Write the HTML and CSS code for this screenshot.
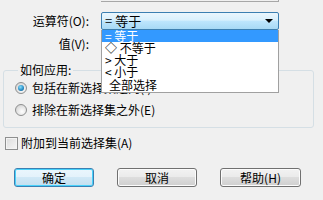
FILE: index.html
```html
<!DOCTYPE html>
<html>
<head>
<meta charset="utf-8">
<link rel="stylesheet" href="styles.css">
</head>
<body>
<div class="dlg">
  <div class="topedge"></div>
  <div class="row r1">
    <span class="lbl">运算符(<u>O</u>):</span>
    <div class="combo">
      <span class="ctext">= 等于</span>
      <span class="arrow"></span>
    </div>
  </div>
  <div class="row r2">
    <span class="lbl">值(<u>V</u>):</span>
  </div>
  <fieldset class="group">
    <legend class="legend">如何应用:</legend>
    <div class="opt first">
      <span class="radio on"><span class="dot"></span></span>
      <span class="otext">包括在新选择集之内(<u>I</u>)</span>
    </div>
    <div class="opt">
      <span class="radio"></span>
      <span class="otext">排除在新选择集之外(<u>E</u>)</span>
    </div>
  </fieldset>
  <div class="check">
    <span class="box"></span>
    <span class="ctxt">附加到当前选择集(<u>A</u>)</span>
  </div>
  <div class="buttons">
    <button class="btn default">确定</button>
    <button class="btn">取消</button>
    <button class="btn wide">帮助(<u>H</u>)</button>
  </div>
  <ul class="list">
    <li class="item sel">= 等于</li>
    <li class="item">◇ 不等于</li>
    <li class="item">&gt; 大于</li>
    <li class="item">&lt; 小于</li>
    <li class="item last">全部选择</li>
  </ul>
</div>
</body>
</html>
```

FILE: styles.css
```css
html, body {
  margin: 0;
  padding: 0;
  background: #f0f0f0;
}
.dlg {
  position: relative;
  width: 323px;
  height: 200px;
  overflow: hidden;
  font-family: "Noto Sans CJK SC", "Liberation Sans", sans-serif;
  font-size: 12px;
  color: #000;
}
u { text-decoration: none; }
.topedge {
  margin-left: 101px;
  width: 177px;
  height: 1px;
  border-bottom: 1px solid #a7a7a7;
  border-right: 1px solid #a7a7a7;
}
.row {
  display: grid;
  grid-template-columns: 101px 178px;
  height: 18px;
  align-items: center;
}
.r1 { margin-top: 10px; }
.r2 { margin-top: 5px; }
.lbl {
  text-align: right;
  padding-right: 12px;
  line-height: 18px;
}
.combo {
  box-sizing: border-box;
  height: 18px;
  border: 1px solid #3c7fb1;
  border-radius: 2px;
  background: linear-gradient(#eaf6fd, #d9f0fc 45%, #bee6fd 50%, #a7d9f5);
  display: flex;
  align-items: center;
  justify-content: space-between;
  padding: 0 5px 0 3px;
}
.ctext {
  font-size: 13px;
  line-height: 16px;
}
.arrow {
  width: 0;
  height: 0;
  border-left: 4px solid transparent;
  border-right: 4px solid transparent;
  border-top: 4px solid #000;
}
.group {
  margin: 10px 9px 0 3px;
  padding: 0 0 9px 11px;
  border: 1px solid #d5dfe5;
  border-radius: 3px;
  min-width: 0;
}
.legend {
  padding: 0 2px;
  margin-left: 3px;
  line-height: 14px;
}
.opt {
  display: flex;
  align-items: center;
  height: 16px;
  margin-top: 5px;
}
.opt.first { margin-top: 3px; }
.opt + .opt { margin-top: 6px; }
.radio {
  box-sizing: border-box;
  width: 12px;
  height: 12px;
  border-radius: 50%;
  border: 1px solid #8e8f8f;
  background: radial-gradient(circle at 60% 65%, #ffffff, #e0e0e0 60%, #c9c9c9);
  display: flex;
  align-items: center;
  justify-content: center;
}
.dot {
  width: 6px;
  height: 6px;
  border-radius: 50%;
  background: radial-gradient(circle at 40% 35%, #8be0fb, #2a8fc8 55%, #0c4a73);
}
.otext {
  margin-left: 5px;
  line-height: 16px;
  white-space: nowrap;
}
.check {
  display: flex;
  align-items: center;
  height: 16px;
  margin: 7px 0 0 5px;
}
.box {
  box-sizing: border-box;
  width: 13px;
  height: 13px;
  border: 1px solid #8e8f8f;
  background: linear-gradient(135deg, #dcdcdc, #f6f6f6);
  box-shadow: inset 0 0 0 1px #f4f4f4;
}
.ctxt {
  margin-left: 3px;
  line-height: 16px;
}
.buttons {
  display: flex;
  gap: 23px;
  margin: 17px 0 0 14px;
}
.btn {
  box-sizing: border-box;
  width: 80px;
  height: 19px;
  padding: 0;
  font: inherit;
  line-height: 16px;
  color: #000;
  border: 1px solid #707070;
  border-radius: 3px;
  background: linear-gradient(#f2f2f2, #ebebeb 45%, #dddddd 50%, #cfcfcf);
  box-shadow: inset 0 0 0 1px #fcfcfc;
}
.btn.wide { width: 81px; }
.btn.default {
  border-color: #3c7fb1;
  box-shadow: inset 0 0 0 1px #48d2fb;
  background: linear-gradient(#eaf6fd, #e4f2fb 45%, #d0e8f6 50%, #c3dfef);
}
.list {
  position: absolute;
  left: 101px;
  top: 30px;
  width: 178px;
  box-sizing: border-box;
  margin: 0;
  padding: 0;
  list-style: none;
  background: #fff;
  border: 1px solid #a0a0a0;
  border-top: none;
}
.item {
  height: 12px;
  line-height: 12px;
  font-size: 12px;
  padding-left: 3px;
  white-space: nowrap;
}
.item.sel {
  background: #3399ff;
  color: #fff;
}
.item.last {
  height: 14px;
  line-height: 14px;
  padding-left: 7px;
}
```
